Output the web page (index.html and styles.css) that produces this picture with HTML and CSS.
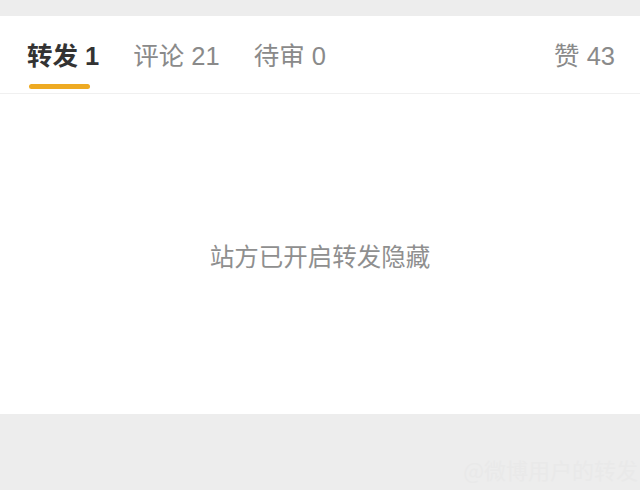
FILE: index.html
```html
<!DOCTYPE html>
<html lang="zh">
<head>
<meta charset="utf-8">
<link rel="stylesheet" href="styles.css">
</head>
<body>
<div class="page">
  <div class="card">
    <div class="tabs">
      <div class="tab active">
        <span class="label">转发 1</span>
        <span class="bar"></span>
      </div>
      <div class="tab"><span class="label">评论 21</span></div>
      <div class="tab"><span class="label">待审 0</span></div>
      <div class="spacer"></div>
      <div class="tab like"><span class="label">赞 43</span></div>
    </div>
    <div class="empty">站方已开启转发隐藏</div>
  </div>
  <div class="footer"><span class="mark">@微博用户的转发</span></div>
</div>
</body>
</html>
```

FILE: styles.css
```css
html, body {
  margin: 0;
  padding: 0;
  background: #ededed;
}
body {
  font-family: "Noto Sans CJK SC", "Noto Sans", sans-serif;
  width: 640px;
  height: 490px;
  overflow: hidden;
}
.page {
  padding-top: 16px;
}
.card {
  background: #fff;
  height: 398px;
  display: flex;
  flex-direction: column;
}
.tabs {
  display: flex;
  align-items: flex-start;
  height: 77px;
  border-bottom: 1px solid #f0f0f0;
  padding: 0 25px 0 27px;
  gap: 34px;
}
.tab {
  display: flex;
  flex-direction: column;
  padding-top: 24px;
}
.label {
  font-family: "Liberation Sans", "Noto Sans CJK SC", sans-serif;
  font-size: 25.5px;
  line-height: 32px;
  color: #8a8a8a;
  white-space: nowrap;
}
.tab.active .label {
  color: #333;
  font-weight: 700;
}
.bar {
  display: block;
  width: 61px;
  height: 5px;
  margin: 12px 0 0 2px;
  background: #eeaa22;
  border-radius: 3px;
}
.spacer {
  flex: 1;
}
.empty {
  flex: 1;
  display: flex;
  align-items: center;
  justify-content: center;
  padding-top: 2px;
  font-size: 24.5px;
  color: #8f8f8f;
}
.footer {
  height: 76px;
  display: flex;
  justify-content: flex-end;
  align-items: flex-end;
}
.mark {
  font-size: 22px;
  line-height: 30px;
  margin: 0 0 6px 0;
  color: #e9e9e9;
  padding-right: 2px;
}
```
